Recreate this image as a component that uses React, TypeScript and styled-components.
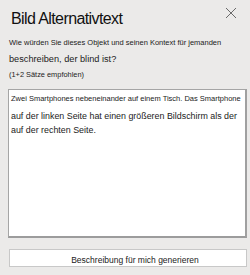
import React from "react";
import styled, { createGlobalStyle } from "styled-components";

const Global = createGlobalStyle`
  html, body { margin: 0; padding: 0; background: #ebeae9; }
  * { box-sizing: border-box; }
`;

const Pane = styled.div`
  width: 250px;
  height: 275px;
  background: #ebeae9;
  padding: 0 3px 0 8px;
  font-family: "Liberation Sans", Arial, sans-serif;
  color: #1b1b1b;
  display: flex;
  flex-direction: column;
`;

const Header = styled.div`
  display: flex;
  justify-content: space-between;
  align-items: flex-start;
  padding-top: 9px;
`;

const Title = styled.h1`
  margin: 0 0 0 3px;
  font-size: 16px;
  font-weight: 400;
  letter-spacing: -0.6px;
  line-height: 20px;
  color: #111;
`;

const Close = styled.button`
  border: 0;
  background: transparent;
  padding: 0;
  margin: -2px 10px 0 0;
  width: 12px;
  height: 12px;
  display: flex;
  cursor: pointer;
`;

const Prompt = styled.div<{ $size: number; $lh: number; $mt: number }>`
  font-size: ${(p) => p.$size}px;
  line-height: ${(p) => p.$lh}px;
  margin-top: ${(p) => p.$mt}px;
  margin-left: 1px;
  white-space: nowrap;
`;

const TextBox = styled.div`
  margin-top: 8.5px;
  height: 149px;
  background: #fff;
  border: 1px solid #a5a5a5;
  border-right: 2px solid #a0a0a0;
  border-bottom: 2px solid #9c9c9c;
  padding: 2.5px 2px 0 2px;
`;

const Line = styled.div<{ $size: number; $lh: number; $mt?: number }>`
  font-size: ${(p) => p.$size}px;
  line-height: ${(p) => p.$lh}px;
  margin-top: ${(p) => p.$mt ?? 0}px;
  white-space: nowrap;
  color: #1b1b1b;
`;

const GenerateButton = styled.button`
  margin: 11px 0 0 1px;
  height: 18px;
  background: #fff;
  border: 1px solid #c8c8c8;
  font-family: "Liberation Sans", Arial, sans-serif;
  font-size: 8.5px;
  line-height: 12px;
  color: #1b1b1b;
  padding: 3.5px 0 0 14px;
  display: flex;
  justify-content: center;
  align-items: flex-start;
`;

export default function App() {
  return (
    <>
      <Global />
      <Pane>
        <Header>
          <Title>Bild Alternativtext</Title>
          <Close aria-label="Schließen">
            <svg width="12" height="12" viewBox="0 0 12 12">
              <path d="M1 1 L11 11 M11 1 L1 11" stroke="#6a6a6a" strokeWidth="1" fill="none" />
            </svg>
          </Close>
        </Header>
        <Prompt $size={7.5} $lh={12} $mt={7.5}>
          Wie würden Sie dieses Objekt und seinen Kontext für jemanden
        </Prompt>
        <Prompt $size={9.2} $lh={14} $mt={3.5}>
          beschreiben, der blind ist?
        </Prompt>
        <Prompt $size={7.4} $lh={12} $mt={2.5}>
          (1+2 Sätze empfohlen)
        </Prompt>
        <TextBox>
          <Line $size={7.5} $lh={12}>
            Zwei Smartphones nebeneinander auf einem Tisch. Das Smartphone
          </Line>
          <Line $size={8.9} $lh={14} $mt={4.5}>
            auf der linken Seite hat einen größeren Bildschirm als der
          </Line>
          <Line $size={8.9} $lh={14}>
            auf der rechten Seite.
          </Line>
        </TextBox>
        <GenerateButton>Beschreibung für mich generieren</GenerateButton>
      </Pane>
    </>
  );
}
